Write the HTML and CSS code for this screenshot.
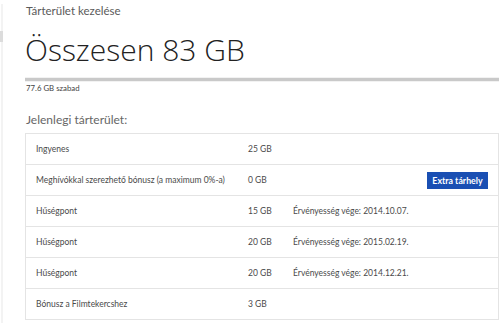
FILE: index.html
```html
<!DOCTYPE html>
<html lang="hu">
<head>
<meta charset="utf-8">
<link rel="stylesheet" href="styles.css">
</head>
<body>
<div class="page">
  <div class="mark"></div>
  <div class="crumb">Tárterület kezelése</div>
  <h1 class="total">Összesen 83 GB</h1>
  <div class="bar"></div>
  <div class="free">77.6 GB szabad</div>
  <h2 class="sub">Jelenlegi tárterület:</h2>
  <div class="table">
    <div class="row"><span class="c1">Ingyenes</span><span class="c2">25 GB</span><span class="c3"></span></div>
    <div class="row"><span class="c1">Meghívókkal szerezhető bónusz (a maximum 0%-a)</span><span class="c2">0 GB</span><span class="c3 end"><button class="btn">Extra tárhely</button></span></div>
    <div class="row"><span class="c1">Hűségpont</span><span class="c2">15 GB</span><span class="c3">Érvényesség vége: 2014.10.07.</span></div>
    <div class="row"><span class="c1">Hűségpont</span><span class="c2">20 GB</span><span class="c3">Érvényesség vége: 2015.02.19.</span></div>
    <div class="row"><span class="c1">Hűségpont</span><span class="c2">20 GB</span><span class="c3">Érvényesség vége: 2014.12.21.</span></div>
    <div class="row"><span class="c1">Bónusz a Filmtekercshez</span><span class="c2">3 GB</span><span class="c3"></span></div>
  </div>
</div>
</body>
</html>
```
FILE: styles.css
```css
html, body { margin: 0; padding: 0; background: #fff; }
body { font-family: Lato, "Open Sans", sans-serif; color: #444; }
.page {
  position: relative;
  margin-left: 1px;
  border-left: 2px solid #f3f3f3;
  padding: 0 1px 0 22px;
  height: 323px;
  box-sizing: border-box;
}
.mark {
  position: absolute;
  left: -3px; top: 27px;
  width: 3px; height: 11px;
  background: #dcdcdc;
}
.crumb {
  margin-top: 4px;
  font-size: 11.5px;
  line-height: 14px;
  color: #5a5a5a;
  padding-left: 1px;
}
.total {
  margin: 12px 0 0 0;
  font-family: "Open Sans", sans-serif;
  font-size: 30px;
  font-weight: 300;
  color: #222;
  line-height: 40px;
  height: 40px;
}
.bar {
  margin-top: 8px;
  height: 3px;
  background: #c9c9c9;
  box-shadow: 0 -1px 0 #f2f2f2, 0 1px 0 #f2f2f2;
}
.free {
  margin-top: 2px;
  font-size: 7.8px;
  line-height: 10px;
  color: #444;
  padding-left: 1px;
}
.sub {
  margin: 19px 0 0 0;
  font-size: 12px;
  font-weight: 400;
  color: #666;
  line-height: 16px;
  padding-left: 1px;
}
.table {
  margin-top: 5px;
  border: 1px solid #e4e4e4;
}
.row {
  display: flex;
  align-items: center;
  height: 30px;
  border-top: 1px solid #e4e4e4;
  font-size: 8.5px;
  color: #4a4a4a;
  padding-left: 10px;
}
.row:first-child { border-top: none; }
.c1 { width: 212px; flex: none; }
.c2 { width: 45px; flex: none; }
.c3 { flex: 1; display: flex; padding-right: 10px; }
.c3.end { justify-content: flex-end; }
.btn {
  background: #1a4fb3;
  color: #fff;
  border: none;
  font-family: inherit;
  font-size: 8.8px;
  font-weight: 700;
  height: 17px;
  width: 61px;
  padding: 0;
}
```
